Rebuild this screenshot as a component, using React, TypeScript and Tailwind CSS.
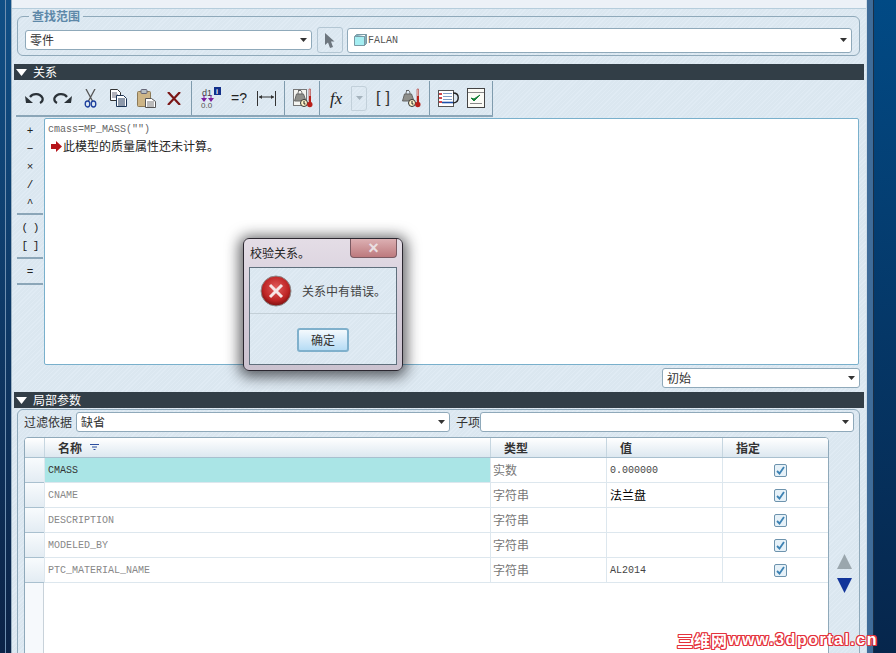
import React from 'react';

const cjk = "[font-family:'Noto_Sans_CJK_SC','Liberation_Sans',sans-serif]";
const mono = "[font-family:'Liberation_Mono','Noto_Sans_CJK_SC',monospace]";
const hatch =
  'bg-[repeating-linear-gradient(135deg,#e0ebf4_0px,#e0ebf4_1px,#dbe7f0_1px,#dbe7f0_3px)]';

const Caret = ({ color = '#333' }: { color?: string }) => (
  <svg width="7" height="4" viewBox="0 0 7 4" className="shrink-0">
    <path d="M0 0h7L3.500 4z" fill={color} />
  </svg>
);

const Select = ({ text, className, font = cjk }: { text: string; className: string; font?: string }) => (
  <div
    className={`flex items-center justify-between bg-white border border-[#8fa9ba] rounded-[3px] pl-[4px] pr-[4px] text-[12px] text-[#333] ${font} ${className}`}
  >
    <span className="leading-none">{text}</span>
    <Caret />
  </div>
);

const SectionBar = ({ title }: { title: string }) => (
  <div className={`ml-[2px] w-[850px] h-[16px] bg-[#323e47] flex items-center pl-[2px] gap-[6px] text-white text-[12px] ${cjk}`}>
    <svg width="11" height="7" viewBox="0 0 11 7">
      <path d="M0 0h11L5.500 7z" fill="#fff" />
    </svg>
    <span className="leading-none">{title}</span>
  </div>
);

const Undo = ({ flip = false }: { flip?: boolean }) => (
  <svg width="19" height="12" viewBox="0 0 19 12" className={flip ? '-scale-x-100' : ''}>
    <path d="M5 5C8 1 15 1 17.500 6C18 8 17 10 15 11" fill="none" stroke="#2b3238" strokeWidth="2.200" />
    <path d="M0 4l8 7H1z" fill="#2b3238" />
  </svg>
);

const Scissors = () => (
  <svg width="13" height="19" viewBox="0 0 13 19">
    <path d="M2 0l6.500 12M11 0L4.500 12" fill="none" stroke="#555" strokeWidth="1.300" />
    <ellipse cx="3.500" cy="15" rx="2.300" ry="3" fill="none" stroke="#1d3f9c" strokeWidth="1.300" />
    <ellipse cx="9.500" cy="15" rx="2.300" ry="3" fill="none" stroke="#1d3f9c" strokeWidth="1.300" />
  </svg>
);

const Copy = () => (
  <svg width="17" height="18" viewBox="0 0 17 18">
    <path d="M.5.500h7l3 3v8h-10z" fill="#fff" stroke="#333" />
    <path d="M2 4h5M2 6h6M2 8h6" stroke="#667" />
    <path d="M6.500 6.500h7l3 3v8h-10z" fill="#fff" stroke="#1c3556" />
    <path d="M8 10h7M8 12h7M8 14h7M8 16h7" stroke="#1c3556" />
  </svg>
);

const Paste = () => (
  <svg width="19" height="19" viewBox="0 0 19 19">
    <rect x=".5" y="2.500" width="13" height="15" rx="1" fill="#cdb586" stroke="#8c7a58" />
    <rect x="4" y=".5" width="6" height="4" rx="1" fill="#b6bec4" stroke="#667" />
    <path d="M8.500 9.500h6l4 3v6h-10z" fill="#fff" stroke="#555" />
    <path d="M10 13h7M10 15h7M10 17h7" stroke="#777" />
  </svg>
);

const Delete = () => (
  <svg width="14" height="13" viewBox="0 0 14 13">
    <path d="M1 0l12 13M13 0L1 13" stroke="#7a1616" strokeWidth="2.200" />
  </svg>
);

const D1Icon = () => (
  <svg width="21" height="22" viewBox="0 0 21 22">
    <text x="2" y="9" fontSize="9" fill="#444" fontFamily="Liberation Sans">d1</text>
    <path d="M4 8v5M11 8v5" stroke="#7b1f9c" />
    <path d="M1 11h6L4 15zM8 11h6l-3 4z" fill="#7b1f9c" />
    <text x="1" y="21" fontSize="8" fill="#555" fontFamily="Liberation Sans">0.0</text>
    <rect x="14" y="0" width="7" height="8" fill="#12308a" />
    <text x="16" y="7" fontSize="7" fontWeight="bold" fill="#fff" fontFamily="Liberation Sans">i</text>
  </svg>
);

const DimIcon = () => (
  <svg width="19" height="15" viewBox="0 0 19 15">
    <path d="M.5 0v15M18.500 0v15M2 6h15" stroke="#333" />
    <path d="M2 6l3-2v4zM17 6l-3-2v4z" fill="#333" />
  </svg>
);

const Weight = ({ boxed = false }: { boxed?: boolean }) => (
  <svg width="20" height="20" viewBox="0 0 20 20">
    {boxed && <rect x=".5" y="1.500" width="13" height="16" fill="#f4f4f0" stroke="#777" />}
    <path d="M5 2.500h3M3.500 6h7L13 13H1.500z" fill="#8f8f8a" stroke="#666" />
    <path d="M5 6c0-5 4-5 4 0" fill="none" stroke="#666" />
    <circle cx="11" cy="15" r="3.500" fill="#fff3c8" stroke="#333" />
    <path d="M11 13v3h1.500" stroke="#222" fill="none" />
    <path d="M16 1h1.500v12.500H16z" fill="#f3d6d0" stroke="#a33" strokeWidth=".6" />
    <circle cx="16.800" cy="16.500" r="2.700" fill="#b9201a" />
    <path d="M16 8h2v7h-2z" fill="#b9201a" />
  </svg>
);

const ListIcon = () => (
  <svg width="21" height="17" viewBox="0 0 21 17">
    <rect x=".5" y=".5" width="15" height="16" fill="#fff" stroke="#555" />
    <path d="M5 3.500h9M5 6.500h9M5 9.500h9" stroke="#7f9cc4" />
    <path d="M1 3h3v2H1zM1 7h3v2H1zM1 11h3v2H1z" fill="#d0484c" />
    <path d="M15 3c7 0 7 9 0 10" fill="none" stroke="#222" strokeWidth="1.400" />
    <path d="M4 12.500h11" stroke="#1d4fa8" strokeWidth="1.600" />
  </svg>
);

const CheckDoc = () => (
  <svg width="18" height="20" viewBox="0 0 18 20">
    <rect x=".5" y=".5" width="17" height="19" fill="#fbfbf6" stroke="#444" />
    <path d="M1 4.500h16M3 15.500h12" stroke="#888" />
    <path d="M4 10l3 3 6-6-6 4z" fill="#14803a" stroke="#14803a" />
  </svg>
);

const Sep = () => <div className="w-px self-stretch bg-[#7f9bad] shrink-0" />;

const Toolbar = () => (
  <div className="ml-[4px] mt-px h-[36px] w-[477px] flex border-b-2 border-[#8ba6b8]">
    <div className="w-[175px] flex items-center">
      <span className="ml-[9px]"><Undo /></span>
      <span className="ml-[9px]"><Undo flip /></span>
      <span className="ml-[12px]"><Scissors /></span>
      <span className="ml-[13px]"><Copy /></span>
      <span className="ml-[10px]"><Paste /></span>
      <span className="ml-[11px]"><Delete /></span>
    </div>
    <Sep />
    <div className="w-[92px] flex items-center pl-[8px]">
      <D1Icon />
      <span className="ml-[10px] w-[17px] text-[14px] leading-none text-[#222] [font-family:'Liberation_Sans',sans-serif]">=?</span>
      <span className="ml-[9px]"><DimIcon /></span>
    </div>
    <Sep />
    <div className="w-[34px] flex items-center pl-[8px]"><Weight boxed /></div>
    <Sep />
    <div className="w-[109px] flex items-center pl-[10px]">
      <span className="w-[21px] text-[17px] italic leading-none text-[#222] [font-family:'Liberation_Serif',serif]">fx</span>
      <div className="h-[25px] w-[16px] border border-[#c2d0da] rounded-r-[3px] flex items-center justify-center"><Caret color="#a4b2bc" /></div>
      <span className="ml-[9px] w-[14px] flex justify-between text-[16px] leading-none text-[#333] [font-family:'Liberation_Sans',sans-serif]"><span>[</span><span>]</span></span>
      <span className="ml-[11px]"><Weight /></span>
    </div>
    <Sep />
    <div className="flex-1 flex items-center pl-[8px]">
      <ListIcon />
      <span className="ml-[8px]"><CheckDoc /></span>
    </div>
    <Sep />
  </div>
);

const SideGroup = ({ items, className }: { items: string[]; className: string }) => (
  <div className={`w-[26px] flex flex-col items-center border-b-2 border-[#8ba6b8] text-[11px] text-[#222] ${mono} ${className}`}>
    {items.map((t) => (
      <span key={t} className="h-[18px] leading-[18px] whitespace-pre">{t}</span>
    ))}
  </div>
);

const EditorRow = () => (
  <div className="ml-[5px] mt-[1px] h-[247px] w-[842px] flex">
    <div className="w-[26px] shrink-0">
      <SideGroup items={['+', '−', '×', '/', '^']} className="h-[97px] pt-[4px]" />
      <SideGroup items={['( )', '[ ]']} className="h-[44px] pt-[4px] tracking-[-1px]" />
      <SideGroup items={['=']} className="h-[26px] pt-[4px]" />
    </div>
    <div className="ml-px flex-1 bg-white border border-[#79b0cc] rounded-[2px] pl-[3px] pt-[3px]">
      <div className={`h-[16px] leading-[16px] text-[10px] text-[#666] ${mono}`}>cmass=MP_MASS("")</div>
      <div className={`h-[16px] flex items-center text-[12px] text-[#222] ${cjk}`}>
        <svg width="11" height="11" viewBox="0 0 11 11" className="ml-[3px] mr-[1px]">
          <path d="M0 3h5V0l6 5.500L5 11V8H0z" fill="#b5141a" />
        </svg>
        <span className="leading-none">此模型的质量属性还未计算。</span>
      </div>
    </div>
  </div>
);

const rows = [
  { name: 'CMASS', type: '实数', value: '0.000000', active: true },
  { name: 'CNAME', type: '字符串', value: '法兰盘', cjkValue: true },
  { name: 'DESCRIPTION', type: '字符串', value: '' },
  { name: 'MODELED_BY', type: '字符串', value: '' },
  { name: 'PTC_MATERIAL_NAME', type: '字符串', value: 'AL2014' },
];

const Check = () => (
  <div className="w-[13px] h-[13px] rounded-[2px] border border-[#6d93ad] bg-[#e6f1f8] flex items-center justify-center">
    <svg width="9" height="9" viewBox="0 0 9 9">
      <path d="M1 5l2.500 2.500L8 1" fill="none" stroke="#3d82b3" strokeWidth="1.800" />
    </svg>
  </div>
);

const gridCols = 'grid grid-cols-[19px_446px_116px_116px_106px]';

const ParamTable = () => (
  <div className="w-[805px] h-[230px] bg-white border border-[#8fa9ba] rounded-t-[4px] overflow-hidden flex flex-col">
    <div className={`${gridCols} h-[20px] shrink-0 bg-linear-to-b from-white to-[#dde8f0] border-b border-[#a9c0cf] text-[12px] font-bold text-[#333] ${cjk}`}>
      <div />
      <div className="border-l border-[#c6d6e0] pl-[13px] flex items-center gap-[8px]">
        <span className="leading-none">名称</span>
        <svg width="9" height="7" viewBox="0 0 9 7">
          <path d="M0 .5h9M2 3h5M3.500 5.500h2" stroke="#2a4ea0" strokeWidth="1.200" />
        </svg>
      </div>
      <div className="border-l border-[#c6d6e0] pl-[13px] flex items-center leading-none">类型</div>
      <div className="border-l border-[#c6d6e0] pl-[13px] flex items-center leading-none">值</div>
      <div className="border-l border-[#c6d6e0] pl-[13px] flex items-center leading-none">指定</div>
    </div>
    {rows.map((r) => (
      <div key={r.name} className={`${gridCols} h-[25px] shrink-0`}>
        <div className="bg-linear-to-b from-[#f8fbfd] to-[#e3ecf3] border-b border-[#a9c0cf]" />
        <div className={`flex items-center pl-[3px] border-l border-b border-[#dde7ee] text-[10px] ${mono} ${r.active ? 'bg-[#aae5e6] text-[#333]' : 'text-[#888]'}`}>
          {r.name}
        </div>
        <div className={`flex items-center pl-[2px] border-l border-b border-[#dde7ee] text-[12px] text-[#777] ${cjk}`}>
          <span className="leading-none">{r.type}</span>
        </div>
        <div className={`flex items-center pl-[3px] border-l border-b border-[#dde7ee] ${r.cjkValue ? `text-[12px] text-black ${cjk}` : `text-[10px] text-[#444] ${mono}`}`}>
          {r.value}
        </div>
        <div className="flex items-center pl-[51px] border-l border-b border-[#dde7ee]">
          <Check />
        </div>
      </div>
    ))}
    <div className="flex-1 flex">
      <div className="w-[19px] bg-[#f6f9fc] border-r border-[#c8d2da]" />
    </div>
  </div>
);

const Dialog = () => (
  <div className={`absolute left-[243px] top-[238px] w-[160px] h-[133px] rounded-[6px] border border-[#2b2730] bg-linear-to-b from-[#e4dde6] via-[#d5ccd9] to-[#cbc2cf] shadow-[0_2px_14px_4px_rgba(20,20,25,0.65)] overflow-hidden ${cjk}`}>
    <div className="h-[28px] flex items-start justify-between">
      <span className="ml-[6px] mt-[6px] text-[12px] leading-[16px] text-[#222]">校验关系。</span>
      <div className="mr-[5px] w-[47px] h-[19px] rounded-b-[4px] border border-t-0 border-[#7a5a62] bg-linear-to-b from-[#dcb0b3] to-[#bd7a7e] flex items-center justify-center text-[18px] leading-none font-bold text-[#eadfe2] [font-family:'Liberation_Sans',sans-serif]">
        ×
      </div>
    </div>
    <div className={`mx-[5px] h-[98px] border border-[#5f6f7c] ${hatch} flex flex-col`}>
      <div className="h-[46px] flex items-center border-b border-[#c3cfd7] pl-[10px]">
        <svg width="32" height="32" viewBox="0 0 32 32">
          <defs>
            <radialGradient id="err" cx="50%" cy="40%" r="60%">
              <stop offset="0" stopColor="#e25c5c" />
              <stop offset="0.7" stopColor="#bd2424" />
              <stop offset="1" stopColor="#7c1010" />
            </radialGradient>
          </defs>
          <circle cx="16" cy="16" r="15" fill="url(#err)" stroke="#8b8b8b" />
          <path d="M10 10l12 12M22 10L10 22" stroke="#f6e6e6" strokeWidth="3" />
        </svg>
        <span className="ml-[10px] text-[12px] leading-none text-[#444]">关系中有错误。</span>
      </div>
      <div className="flex-1 flex items-center justify-center">
        <div className="w-[52px] h-[24px] mt-[1px] rounded-[3px] border-2 border-[#7fb0cc] bg-linear-to-b from-[#f4f9fd] to-[#b6dcf5] flex items-center justify-center text-[12px] leading-none text-[#333]">
          确定
        </div>
      </div>
    </div>
  </div>
);

export default function App() {
  return (
    <div className={`relative w-[896px] h-[653px] overflow-hidden flex ${cjk}`}>
      {/* left window frame */}
      <div className="w-[12px] shrink-0 flex bg-linear-to-b from-[#0f4f86] to-[#0b2347]">
        <div className="w-[5px]" />
        <div className="w-px bg-[#6f8fb0]" />
        <div className="w-[5px]" />
        <div className="w-px bg-[#9db3c4]" />
      </div>

      <div className={`w-[854px] shrink-0 ${hatch}`}>
        <div className="h-[9px] bg-[#ecf1f7] border-b border-[#b5cddc]" />

        <fieldset className="ml-[5px] w-[843px] h-[47px] border border-[#8fa9ba] rounded-[6px] pl-[7px]">
          <legend className="ml-[4px] px-[3px] text-[12px] leading-[14px] font-bold text-[#5d88a8]">查找范围</legend>
          <div className="flex items-center gap-[5px] h-[26px] mt-[4px]">
            <Select text="零件" className="w-[287px] h-[20px]" />
            <div className="w-[26px] h-[26px] rounded-[3px] border border-[#b3c6d3] flex items-center justify-center">
              <svg width="10" height="15" viewBox="0 0 10 15">
                <path d="M0 0l9.500 8.500H6L8 14l-3 1-2-5.500L0 12z" fill="#6d767e" />
              </svg>
            </div>
            <div className={`ml-[-1px] w-[505px] h-[25px] bg-white border border-[#8fa9ba] rounded-[3px] flex items-center justify-between pl-[6px] pr-[4px] text-[10px] text-[#555] ${mono}`}>
              <span className="flex items-center gap-[1px]">
                <svg width="13" height="12" viewBox="0 0 13 12">
                  <path d="M.5 2.500h10v9H.5z" fill="#a5eef2" stroke="#7a9aa5" />
                  <path d="M.5 2.500l2-2h10l-2 2v9l2-2v-9" fill="#7fb0bc" stroke="#7a9aa5" />
                </svg>
                FALAN
              </span>
              <Caret />
            </div>
          </div>
        </fieldset>

        <div className="mt-[8px]"><SectionBar title="关系" /></div>
        <Toolbar />
        <EditorRow />

        <div className="mt-[3px] flex justify-end pr-[6px]">
          <Select text="初始" className="w-[198px] h-[20px]" />
        </div>

        <div className="mt-[4px]"><SectionBar title="局部参数" /></div>

        <div className="mt-px ml-[5px] w-[843px] h-[260px] border border-[#8fa9ba] rounded-t-[6px] pt-[2px]">
          <div className="flex items-center h-[20px] pl-[6px] text-[12px] text-[#333]">
            <span className="w-[52px] leading-none">过滤依据</span>
            <Select text="缺省" className="w-[374px] h-[20px]" />
            <span className="ml-[6px] w-[24px] leading-none">子项</span>
            <Select text="" className="w-[374px] h-[20px]" />
          </div>
          <div className="mt-[5px] ml-[6px] flex">
            <ParamTable />
            <div className="ml-[8px] pt-[117px] flex flex-col gap-[9px] items-center">
              <svg width="15" height="15" viewBox="0 0 15 15">
                <path d="M7.500 0L15 15H0z" fill="#9aa6ad" />
              </svg>
              <svg width="15" height="15" viewBox="0 0 15 15">
                <path d="M0 0h15L7.500 15z" fill="#12359a" />
              </svg>
            </div>
          </div>
        </div>
      </div>

      {/* right window frame */}
      <div className="flex-1 flex bg-linear-to-b from-[#014a85] to-[#06264c]">
        <div className="w-px bg-[#cfdde8]" />
        <div className="w-[6px] bg-[#3f6c99]" />
        <div className="w-px bg-[#1c2f45]" />
      </div>

      <Dialog />

      {/* watermark */}
      <div className="absolute left-[677px] top-[631px] h-[18px] flex items-center whitespace-nowrap font-bold text-white [text-shadow:1px_0_#e4323c,-1px_0_#e4323c,0_1px_#e4323c,0_-1px_#e4323c,1px_1px_#e4323c,-1px_-1px_#e4323c,1px_-1px_#e4323c,-1px_1px_#e4323c]">
        <span className="text-[16px] leading-none tracking-[1px]">三维网</span>
        <span className="text-[16px] leading-none tracking-[1.500px] [font-family:'Liberation_Sans',sans-serif]">www.3dportal.cn</span>
      </div>
    </div>
  );
}
